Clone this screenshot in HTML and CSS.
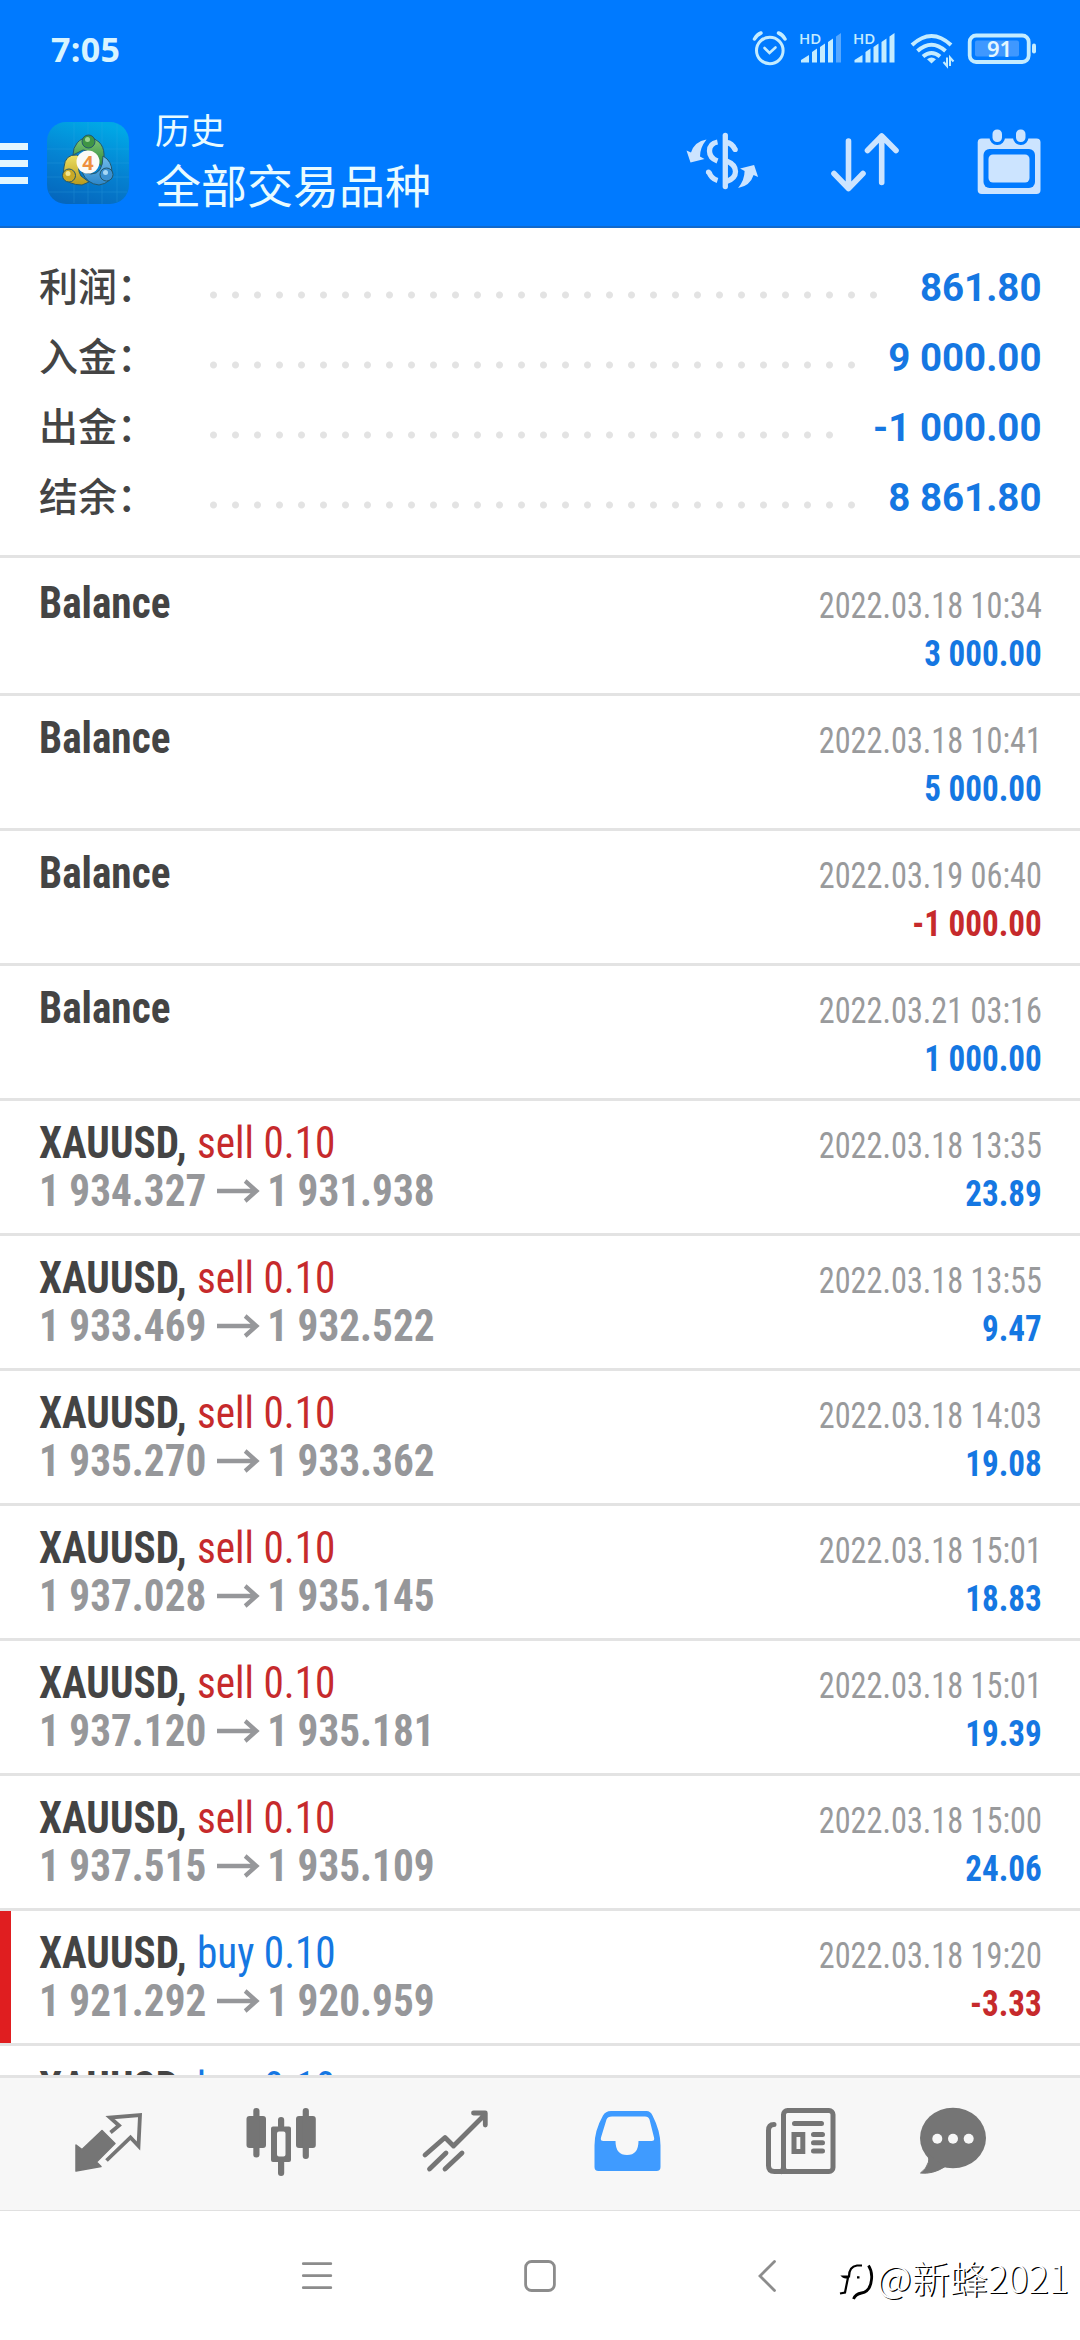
FILE: index.html
```html
<!DOCTYPE html>
<html lang="zh-CN">
<head>
<meta charset="utf-8">
<title>历史</title>
<link rel="stylesheet" href="styles.css">
</head>
<body>
<div class="screen">
  <header class="header">
    <div class="status">
      <span class="clock">7:05</span>
      <div class="status-icons">
        <svg width="36" height="36" viewBox="750 30.5 36 36" fill="none" stroke="#c4ecff" stroke-linecap="round">
          <circle cx="767.8" cy="50" r="13.3" stroke-width="3"/>
          <path d="M762.500 47.500l5 5 6-5.500" stroke-width="2.600"/>
          <path d="M752.500 38.500q2.500-4.500 6.500-6M783 38.500q-2.500-4.500-6.500-6" stroke-width="3.500"/>
        </svg>
        <svg class="signal" width="43" height="36" viewBox="797 30.500 43 36">
          <path d="M799 62v-2.500l8-5v7.500zM810 62v-10.500l5-3.500v14zM818 62v-15.500l5-3.500v19zM826 62v-20.500l5-3.500v24z" fill="#c4ecff"/>
          <path d="M834 62v-26l5-3.500v29.500z" fill="#57a8ff"/>
          <text class="hd" x="797" y="43">HD</text>
        </svg>
        <svg class="signal" width="43" height="36" viewBox="851.500 30.500 43 36">
          <path d="M853 62v-2.500l8-5v7.500zM864 62v-10.500l5-3.500v14zM872 62v-15.500l5-3.500v19zM880 62v-20.500l5-3.500v24zM888 62v-26l5-3.500v29.500z" fill="#c4ecff"/>
          <text class="hd" x="851.500" y="43">HD</text>
        </svg>
        <svg class="wifi" width="44" height="36" viewBox="908.500 30.500 44 36" fill="none" stroke="#c4ecff" stroke-width="4">
          <path d="M910.500 44.500q19.500-18 39 0M916 50.500q14-12.500 28 0M921.500 56q8.500-7 17 0"/>
          <path d="M930 63l-4.500-4.200q4.500-3.800 9 0z" fill="#c4ecff" stroke="none"/>
          <path d="M945.500 57v8.500l-3.500-4M948.500 65.500v-8.500l3.500 4" stroke-width="2"/>
        </svg>
        <svg class="battery" width="70" height="36" viewBox="966 30.500 70 36">
          <rect x="968.700" y="35" width="59" height="26.500" rx="6.500" fill="none" stroke="#c4ecff" stroke-width="3.800"/>
          <rect x="974" y="40" width="44" height="16" rx="2" fill="#3f98ff"/>
          <rect x="1031" y="43" width="4" height="10" rx="2" fill="#c4ecff"/>
          <text class="level" x="986" y="56.500">91</text>
        </svg>
      </div>
    </div>
    <div class="appbar">
      <div class="burger"><i></i><i></i><i></i></div>
      <svg class="logo" width="84" height="84" viewBox="0 0 84 84">
        <defs>
          <linearGradient id="tile" x1="0.600" y1="0" x2="0.300" y2="1"><stop offset="0" stop-color="#00a8e6"/><stop offset=".5" stop-color="#0583d2"/><stop offset="1" stop-color="#0567bd"/></linearGradient>
          <linearGradient id="green" x1="0" y1="0" x2="0" y2="1"><stop offset="0" stop-color="#83c878"/><stop offset="1" stop-color="#2d8a3a"/></linearGradient>
          <linearGradient id="gold" x1="0" y1="0" x2="0" y2="1"><stop offset="0" stop-color="#eddf62"/><stop offset="1" stop-color="#b89a1c"/></linearGradient>
          <linearGradient id="sky" x1="0" y1="0" x2="0" y2="1"><stop offset="0" stop-color="#73bdeb"/><stop offset="1" stop-color="#2b86ca"/></linearGradient>
        </defs>
        <rect x="1" y="1" width="82" height="82" rx="19" fill="url(#tile)"/>
        <path d="M28 2v80M42 1v82M56 1v82M71 3v78M1 28h82M1 42h82M1 56h82M3 71h78" stroke="#3fb2ea" stroke-width=".7" opacity=".3"/>
        <g stroke="#24586b" stroke-width="1">
          <path d="M27 34a15.500 17 0 0 1 31-1q1 6-2 12l-9-5q-3-11-10-11z" fill="url(#green)"/>
          <path d="M31 34q-12-1-13 12l-1 9q5 9 19 9l7-3-8-6q-5-8 0-18z" fill="url(#gold)"/>
          <path d="M57 35q9 5 9 16 0 11-13 13-12-1-17-13l9 2q12 0 12-18z" fill="url(#sky)"/>
          <circle cx="42.500" cy="20.500" r="6.500" fill="#3f9545"/>
          <circle cx="23" cy="54.500" r="6.500" fill="#c9a926"/>
          <circle cx="60.500" cy="53.500" r="6.500" fill="#3b90d0"/>
        </g>
        <circle cx="41.500" cy="18.500" r="2.500" fill="#9bd492"/><circle cx="22" cy="52.500" r="2.500" fill="#f3e690"/><circle cx="59.500" cy="51.500" r="2.500" fill="#a6d7f5"/>
        <circle cx="42" cy="41" r="11.500" fill="#fbfaf7"/>
        <text class="four" x="42" y="48.500">4</text>
      </svg>
      <div class="titles">
        <div class="subtitle">历史</div>
        <div class="title">全部交易品种</div>
      </div>
      <div class="actions">
        <svg width="80" height="80" viewBox="681.500 122.500 80 80" fill="none" stroke="#cce4ff" stroke-width="5.300">
          <path d="M724.800 135v51" stroke-linecap="round"/>
          <path d="M717 141.500q-8 1.500-8 9 0 7 8 10M717 180q-6.500-2-8.500-8.500M726 142q5.500.500 8.500 7"/>
          <circle cx="708" cy="171.500" r="2.600" fill="#cce4ff" stroke="none"/><circle cx="734.700" cy="149" r="2.600" fill="#cce4ff" stroke="none"/>
          <path d="M726 160.500q9 3.500 9 10.500t-9 10"/>
          <path d="M706 139q-12 2-15.500 13l-4.500-2 4 12 14-3.500-4.500-2.500q0-9 6.500-17z" fill="#cce4ff" stroke="none"/>
          <path d="M706 139q-12 2-15.500 13l-4.500-2 4 12 14-3.500-4.500-2.500q0-9 6.500-17z" fill="#cce4ff" stroke="none" transform="rotate(180 721.800 163.300)"/>
        </svg>
        <svg width="80" height="80" viewBox="825 122.500 80 80" fill="none" stroke="#cce4ff" stroke-width="5.600" stroke-linecap="round" stroke-linejoin="round">
          <path d="M848.500 140.500v47.500M834 173l14.500 15 14.500-15M881.700 182v-46M867.500 150l14.200-14.500 14.300 14.500"/>
        </svg>
        <svg width="80" height="80" viewBox="968 122.500 80 80">
          <rect x="976.700" y="138" width="62.800" height="55.500" rx="4" fill="#cce4ff"/>
          <rect x="982.500" y="148.500" width="51.500" height="39" rx="6" fill="#007aff"/>
          <rect x="987.500" y="154" width="41" height="28" rx="4.500" fill="#cce4ff"/>
          <g fill="#cce4ff" stroke="#007aff" stroke-width="3"><rect x="990" y="127.500" width="12.500" height="15.500" rx="6"/><rect x="1013.500" y="127.500" width="12.500" height="15.500" rx="6"/></g>
        </svg>
      </div>
    </div>
  </header>

  <section class="summary">
    <div class="sum"><span class="label">利润：</span><span class="dots d31"></span><span class="value">861.80</span></div>
    <div class="sum"><span class="label">入金：</span><span class="dots d30"></span><span class="value">9 000.00</span></div>
    <div class="sum"><span class="label">出金：</span><span class="dots d29"></span><span class="value">-1 000.00</span></div>
    <div class="sum"><span class="label">结余：</span><span class="dots d30"></span><span class="value">8 861.80</span></div>
  </section>

  <main class="deals">
    <div class="deal"><div class="info"><div class="name"><b>Balance</b></div></div><div class="meta"><div class="date">2022.03.18 10:34</div><div class="amount">3 000.00</div></div></div>
    <div class="deal"><div class="info"><div class="name"><b>Balance</b></div></div><div class="meta"><div class="date">2022.03.18 10:41</div><div class="amount">5 000.00</div></div></div>
    <div class="deal"><div class="info"><div class="name"><b>Balance</b></div></div><div class="meta"><div class="date">2022.03.19 06:40</div><div class="amount loss">-1 000.00</div></div></div>
    <div class="deal"><div class="info"><div class="name"><b>Balance</b></div></div><div class="meta"><div class="date">2022.03.21 03:16</div><div class="amount">1 000.00</div></div></div>
    <div class="deal"><div class="info"><div class="name"><b>XAUUSD,</b><span class="sell">sell 0.10</span></div><div class="prices">1 934.327<svg class="arrow" viewBox="0 0 45 24"><path d="M0 12h42M30 2l12 10-12 10"/></svg>1 931.938</div></div><div class="meta"><div class="date">2022.03.18 13:35</div><div class="amount">23.89</div></div></div>
    <div class="deal"><div class="info"><div class="name"><b>XAUUSD,</b><span class="sell">sell 0.10</span></div><div class="prices">1 933.469<svg class="arrow" viewBox="0 0 45 24"><path d="M0 12h42M30 2l12 10-12 10"/></svg>1 932.522</div></div><div class="meta"><div class="date">2022.03.18 13:55</div><div class="amount">9.47</div></div></div>
    <div class="deal"><div class="info"><div class="name"><b>XAUUSD,</b><span class="sell">sell 0.10</span></div><div class="prices">1 935.270<svg class="arrow" viewBox="0 0 45 24"><path d="M0 12h42M30 2l12 10-12 10"/></svg>1 933.362</div></div><div class="meta"><div class="date">2022.03.18 14:03</div><div class="amount">19.08</div></div></div>
    <div class="deal"><div class="info"><div class="name"><b>XAUUSD,</b><span class="sell">sell 0.10</span></div><div class="prices">1 937.028<svg class="arrow" viewBox="0 0 45 24"><path d="M0 12h42M30 2l12 10-12 10"/></svg>1 935.145</div></div><div class="meta"><div class="date">2022.03.18 15:01</div><div class="amount">18.83</div></div></div>
    <div class="deal"><div class="info"><div class="name"><b>XAUUSD,</b><span class="sell">sell 0.10</span></div><div class="prices">1 937.120<svg class="arrow" viewBox="0 0 45 24"><path d="M0 12h42M30 2l12 10-12 10"/></svg>1 935.181</div></div><div class="meta"><div class="date">2022.03.18 15:01</div><div class="amount">19.39</div></div></div>
    <div class="deal"><div class="info"><div class="name"><b>XAUUSD,</b><span class="sell">sell 0.10</span></div><div class="prices">1 937.515<svg class="arrow" viewBox="0 0 45 24"><path d="M0 12h42M30 2l12 10-12 10"/></svg>1 935.109</div></div><div class="meta"><div class="date">2022.03.18 15:00</div><div class="amount">24.06</div></div></div>
    <div class="deal flagged"><div class="info"><div class="name"><b>XAUUSD,</b><span class="buy">buy 0.10</span></div><div class="prices">1 921.292<svg class="arrow" viewBox="0 0 45 24"><path d="M0 12h42M30 2l12 10-12 10"/></svg>1 920.959</div></div><div class="meta"><div class="date">2022.03.18 19:20</div><div class="amount loss">-3.33</div></div></div>
    <div class="deal"><div class="info"><div class="name"><b>XAUUSD,</b><span class="buy">buy 0.10</span></div></div></div>
  </main>

  <nav class="tabs">
    <svg width="80" height="80" viewBox="68 2101 80 80"><path d="M76 2145l6 4.500 20-19 13 13-18.500 18.500 4.500 4.500-25 4.500z" fill="#757575" stroke="#757575" stroke-width="1.500" stroke-linejoin="round"/><path d="M110.500 2132.500l8.500-7-9-8 30-2.500-1.500 31-8-8.500-24 23" fill="none" stroke="#757575" stroke-width="3.800"/></svg>
    <svg width="80" height="80" viewBox="241 2101 80 80" fill="#757575"><rect x="246.500" y="2116" width="19.500" height="32" rx="3"/><rect x="253.300" y="2108" width="6.200" height="49.500" rx="3"/><rect x="296" y="2116" width="19.800" height="32" rx="3"/><rect x="302.700" y="2108" width="6.200" height="51" rx="3"/><rect x="278" y="2117" width="6.200" height="12" rx="3"/><rect x="278" y="2158" width="6.200" height="18" rx="3"/><path fill-rule="evenodd" d="M273 2126.500h16q2 0 2 2v31.500q0 2-2 2h-16q-2 0-2-2v-31.500q0-2 2-2zM279 2131.500q-2 0-2 2v21q0 2 2 2h4.500q2 0 2-2v-21q0-2-2-2z"/></svg>
    <svg width="80" height="80" viewBox="414 2101 80 80" fill="none" stroke="#757575" stroke-width="4.800" stroke-linecap="round" stroke-linejoin="round"><path d="M424 2155l20-17.500 8.500 8.500 31-31M472.500 2113h11.800v12M428.500 2169l16.500-16M444 2169l17-16"/></svg>
    <svg width="80" height="80" viewBox="588 2101 80 80"><path d="M611 2111h35.500q4 0 6 4.500 8 15.500 8 30v21.500q0 4-4 4h-58q-4 0-4-4v-21.500q0-15 8.500-30 2.500-4.500 8-4.500z" fill="#3f9bff"/><path d="M612 2116.500h33q3.500 0 4.500 3l4.500 18q1 3.500-2.500 3.500h-13q0 14-11.500 14t-11.500-14h-12q-3.500 0-2.500-3.500l5.500-18q1-3 5.500-3z" fill="#f7f7f7"/></svg>
    <svg width="80" height="80" viewBox="761 2101 80 80" fill="none" stroke="#757575" stroke-width="5" stroke-linecap="round"><rect x="783.500" y="2110.500" width="49.500" height="61" rx="4"/><path d="M774 2124.500q-5.500 0-5.500 6v35q0 6 6 6h15M783.500 2160v7q0 3-2 4.500"/><path d="M794.500 2123.500h27M813.500 2134.500h9M813.500 2142.700h9M813.500 2151h9"/><rect x="794" y="2134.500" width="8.800" height="17"/></svg>
    <svg width="80" height="80" viewBox="913 2101 80 80"><ellipse cx="953" cy="2138" rx="33" ry="30.300" fill="#757575"/><path d="M924 2150q6 6 4.500 12-2 7-8 11 12 1.500 24-6z" fill="#757575" stroke="#757575" stroke-linejoin="round"/><g fill="#f7f7f7"><circle cx="937.300" cy="2138.700" r="5"/><circle cx="953" cy="2138.700" r="5"/><circle cx="968.700" cy="2138.700" r="5"/></g></svg>
  </nav>

  <footer class="sysnav">
    <svg class="recent" width="34" height="40" viewBox="300 2255 34 40" stroke="#8c8c8c" stroke-width="2.800" stroke-linecap="round"><path d="M303.300 2262.700h27.500M303.300 2274.700h27.500M303.300 2286.700h27.500"/></svg>
    <svg class="home" width="36" height="40" viewBox="522 2255 36 40" fill="none" stroke="#8c8c8c" stroke-width="2.800"><rect x="525.600" y="2260.500" width="28.800" height="29" rx="6"/></svg>
    <svg class="back" width="22" height="40" viewBox="757 2255 22 40" fill="none" stroke="#8c8c8c" stroke-width="2.800" stroke-linecap="round"><path d="M774.500 2260.500l-14.500 14.500 14.500 14.500"/></svg>
    <div class="watermark">
      <svg width="37" height="42" viewBox="836 2263 37 42" fill="none" stroke="#000" stroke-width="2.200"><path d="M861 2268.500h-5q-8 1-8 11h-6q1 1 5 1l-3 15-5 1M856 2280.300h2.500"/><path d="M867.500 2268.500q4 6 3 14-1 12-10 13.500-6 1-8 6" stroke-width="2.800"/></svg>
      <span>@新蜂2021</span>
    </div>
  </footer>
</div>
</body>
</html>
```
FILE: styles.css
```css
* { box-sizing: border-box; }
body { margin: 0; background: #fff; }
svg { display: block; flex: none; overflow: visible; }

.screen {
  width: 1080px;
  height: 2340px;
  display: flex;
  flex-direction: column;
  overflow: hidden;
  font-family: "Roboto Condensed", Roboto, "Noto Sans CJK SC", sans-serif;
}

/* header */
.header {
  flex: none;
  height: 228px;
  background: #007aff;
  border-bottom: 2px solid #1169cc;
}
.status {
  height: 97px;
  padding: 0 43px 0 51px;
  display: flex;
  align-items: center;
  justify-content: space-between;
}
.clock {
  font: 700 34px/40px "Open Sans", sans-serif;
  letter-spacing: 0.3px;
  color: #d8f4ff;
}
.status-icons { display: flex; }
.signal { margin-left: 11px; }
.wifi { margin-left: 14px; }
.battery { margin-left: 13.5px; }
.hd { font: 600 15px "Open Sans", sans-serif; fill: #c4ecff; }
.level { font: 600 22px "Noto Sans", sans-serif; fill: #e4f7ff; }

.appbar { height: 131px; display: flex; align-items: center; }
.burger { width: 28px; display: grid; gap: 9.500px; padding-top: 2px; }
.burger i { height: 7.500px; background: #e2f6ff; }
.logo { margin-left: 18px; }
.titles {
  margin-left: 25px;
  padding-bottom: 6px;
  color: #e9fbff;
  font-family: "Noto Sans CJK SC", sans-serif;
}
.four { font: 700 20px "Noto Sans", sans-serif; fill: #ee8f3e; text-anchor: middle; }
.subtitle { font-size: 35px; line-height: 46px; }
.title { font-size: 46px; line-height: 62px; }
.actions { margin-left: auto; padding-right: 31.500px; display: flex; gap: 63.500px; }

/* account totals */
.summary {
  flex: none;
  height: 330px;
  padding: 24px 38.500px 0 39px;
  border-bottom: 3px solid #e3e3e3;
}
.sum { height: 70px; display: flex; align-items: center; }
.label {
  width: 170px;
  padding-bottom: 6px;
  color: #444;
  font: 500 39px/64px "Noto Sans CJK SC", sans-serif;
}
.dots {
  height: 8px;
  margin-top: 15px;
  background: radial-gradient(circle at 4.500px 4px, #e3e3e3 3px, transparent 4px) 0 0 / 22px 8px repeat-x;
}
.d31 { width: 682px; }
.d30 { width: 660px; }
.d29 { width: 638px; }
.value {
  margin-left: auto;
  padding-top: 1px;
  color: #1577e2;
  font: 700 38.500px/70px Roboto, sans-serif;
}

/* history list */
.deals { flex: 1; min-height: 0; overflow: hidden; }
.deal {
  height: 135px;
  padding: 18px 38px 0 39px;
  border-top: 3px solid #e3e3e3;
  display: flex;
  justify-content: space-between;
}
.deal:first-child { border-top-color: #fff; }
.flagged { background: linear-gradient(#e01e20, #e01e20) 0 0 / 11px 100% no-repeat; }
.info { transform: scaleX(0.937); transform-origin: left; }
.name, .prices { font-size: 44px; line-height: 48px; white-space: pre; display: flex; }
.name b { color: #444; }
.name span { margin-left: 11px; }
.sell { color: #c62a2c; }
.buy { color: #1577e2; }
.prices { color: #96979a; font-weight: 700; align-items: center; }
.arrow {
  width: 45px;
  height: 24px;
  margin: 0 9px 0 11px;
  fill: none;
  stroke: #96979a;
  stroke-width: 4.500px;
}
.meta { padding-top: 3px; text-align: right; font-size: 37px; line-height: 48px; }
.date { color: #999a9c; transform: scaleX(0.872); transform-origin: right; }
.amount { color: #1577e2; font-weight: 700; transform: scaleX(0.895); transform-origin: right; }
.amount.loss { color: #c62a2c; }

/* tab bar */
.tabs {
  flex: none;
  height: 136px;
  padding: 23px 0 0 21.300px;
  background: #f7f7f7;
  border-top: 3px solid #e3e3e3;
  border-bottom: 1px solid #e0e0e0;
  display: grid;
  grid-template-columns: repeat(5, 173.300px) 130px;
  justify-items: center;
}

/* system navigation */
.sysnav {
  flex: none;
  height: 129px;
  padding-left: 300px;
  display: flex;
  align-items: center;
}
.home { margin-left: 188px; }
.back { margin-left: 199px; }
.watermark {
  margin: 2px 0 0 58px;
  display: flex;
  align-items: center;
  color: #fff;
  white-space: nowrap;
  font: 300 38px/50px "Noto Sans CJK SC", sans-serif;
  text-shadow: 1.300px 1px 0.500px #000;
}
.watermark svg { margin: 9px 3px 0 0; }
```
